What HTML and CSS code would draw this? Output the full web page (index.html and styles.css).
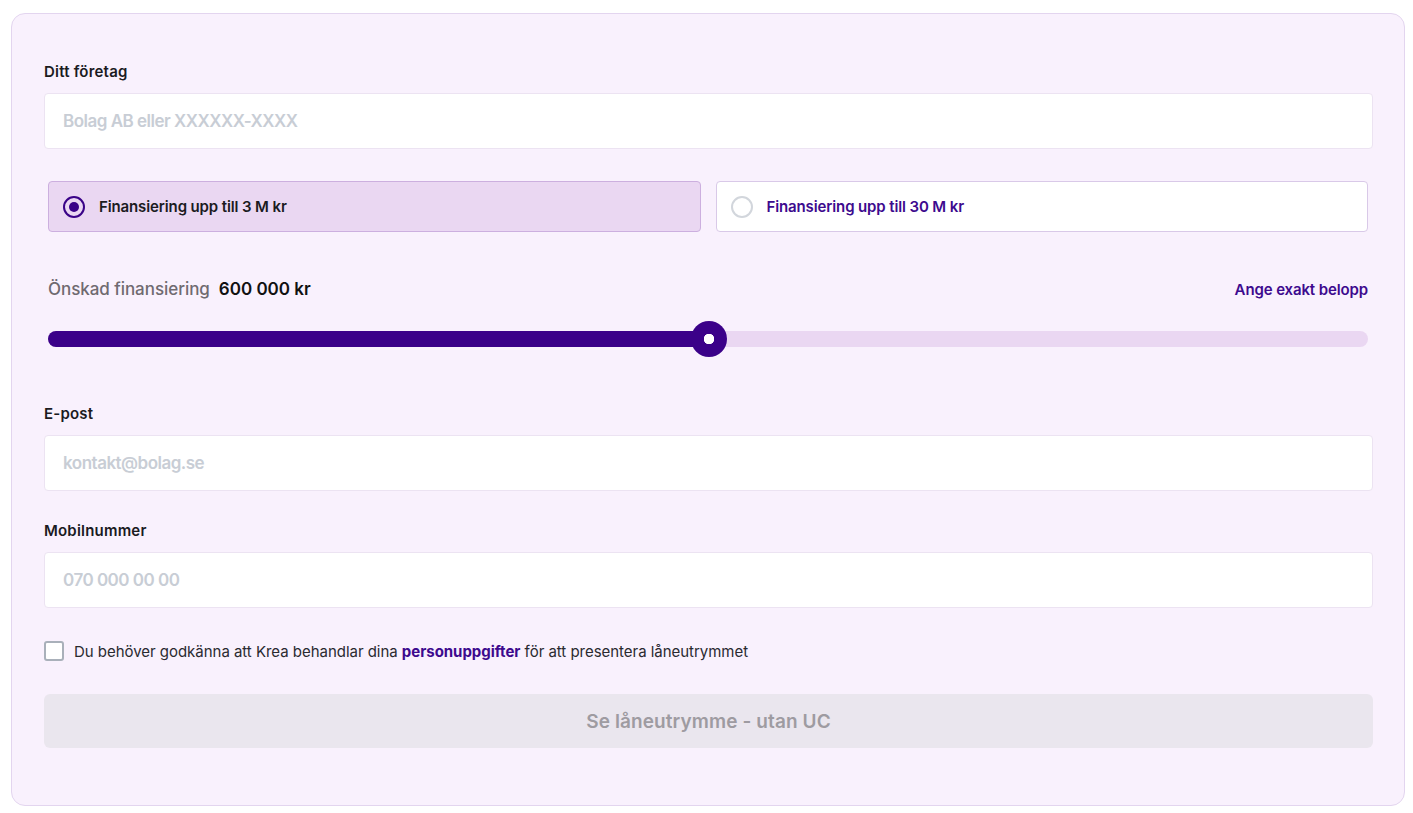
FILE: index.html
```
<!DOCTYPE html>
<html lang="sv">
<head>
<meta charset="utf-8">
<link rel="stylesheet" href="styles.css">
</head>
<body>
<form class="card">
  <div class="field">
    <label class="label">Ditt företag</label>
    <div class="input"><span class="placeholder">Bolag AB eller XXXXXX-XXXX</span></div>
  </div>

  <div class="options">
    <div class="option selected">
      <span class="radio on"><span class="dot"></span></span>
      <span class="option-text">Finansiering upp till 3 M kr</span>
    </div>
    <div class="option">
      <span class="radio"></span>
      <span class="option-text purple">Finansiering upp till 30 M kr</span>
    </div>
  </div>

  <div class="amount">
    <div class="amount-head">
      <div class="amount-left">
        <span class="amount-label">Önskad finansiering</span>
        <span class="amount-value">600 000 kr</span>
      </div>
      <a class="link">Ange exakt belopp</a>
    </div>
    <div class="track">
      <div class="fill" style="width:50%"></div>
      <div class="thumb" style="left:50%"></div>
    </div>
  </div>

  <div class="field email">
    <label class="label">E-post</label>
    <div class="input"><span class="placeholder">kontakt@bolag.se</span></div>
  </div>

  <div class="field phone">
    <label class="label">Mobilnummer</label>
    <div class="input"><span class="placeholder">070 000 00 00</span></div>
  </div>

  <div class="consent">
    <span class="checkbox"></span>
    <span class="consent-text">Du behöver godkänna att Krea behandlar dina <b class="purple">personuppgifter</b> för att presentera låneutrymmet</span>
  </div>

  <div class="button">Se låneutrymme - utan UC</div>
</form>
</body>
</html>
```
FILE: styles.css
```
* { box-sizing: border-box; }
html, body { margin: 0; padding: 0; background: #ffffff; }
body {
  padding: 13px 8px 7px 11px;
  font-family: Inter, "Noto Sans", "Liberation Sans", sans-serif;
  color: #1b1b1f;
}
.card {
  display: flex;
  flex-direction: column;
  width: 1394px;
  height: 793px;
  background: #f9f1fd;
  border: 1px solid #e3d5ef;
  border-radius: 14px;
  padding: 48px 31px 0 32px;
}
.field { display: flex; flex-direction: column; }
.label {
  font-size: 15px;
  line-height: 20px;
  font-weight: 600;
  color: #1b1b1f;
  letter-spacing: 0.2px;
  margin-bottom: 11px;
}
.input {
  height: 56px;
  background: #ffffff;
  border: 1px solid #ece3f2;
  border-radius: 4px;
  display: flex;
  align-items: center;
  padding-left: 18px;
}
.placeholder {
  font-size: 17px;
  color: #c8cdd5;
  font-weight: 600;
  letter-spacing: -0.5px;
}
.options {
  display: flex;
  gap: 15px;
  margin-top: 32px;
  padding: 0 5px 0 4px;
}
.option {
  flex: 1;
  height: 51px;
  border: 1px solid #d9c9e8;
  border-radius: 4px;
  background: #ffffff;
  display: flex;
  align-items: center;
  padding-left: 14px;
  gap: 14px;
}
.option.selected {
  background: #ead7f2;
  border-color: #ccafdf;
}
.radio {
  width: 22px;
  height: 22px;
  border-radius: 50%;
  border: 2px solid #d2d6dc;
  background: #fff;
  display: flex;
  align-items: center;
  justify-content: center;
}
.radio.on { border-color: #3a0388; background: transparent; }
.dot { width: 10px; height: 10px; border-radius: 50%; background: #3a0388; }
.option-text {
  font-size: 15px;
  font-weight: 600;
  color: #1b1b1f;
  letter-spacing: -0.12px;
}
.purple { color: #3d0a8e; }
.amount { margin-top: 45px; padding: 0 5px 0 4px; }
.amount-head {
  display: flex;
  justify-content: space-between;
  align-items: center;
  height: 24px;
}
.amount-left { display: flex; gap: 9px; align-items: baseline; }
.amount-label { font-size: 17px; font-weight: 500; color: #6f6a70; letter-spacing: -0.05px; }
.amount-value { font-size: 17px; font-weight: 600; color: #111; letter-spacing: 0; }
.link { font-size: 15px; font-weight: 600; color: #3d0a8e; letter-spacing: -0.12px; }
.track {
  position: relative;
  height: 16px;
  margin-top: 30px;
  background: #ead7f2;
  border-radius: 8px;
}
.fill {
  height: 16px;
  background: #3b0189;
  border-radius: 8px 0 0 8px;
}
.thumb {
  position: absolute;
  top: 50%;
  width: 36px;
  height: 36px;
  margin: -18px 0 0 -17px;
  border-radius: 50%;
  background: radial-gradient(circle, #ffffff 0 5px, #3b0189 5.5px);
}
.email { margin-top: 57px; }
.phone { margin-top: 30px; }
.consent {
  display: flex;
  align-items: center;
  gap: 10px;
  margin-top: 33px;
  height: 20px;
}
.checkbox {
  width: 20px;
  height: 20px;
  border: 2px solid #a9b0ba;
  border-radius: 3px;
  background: #fff;
}
.consent-text { font-size: 15px; color: #2a2a30; letter-spacing: -0.03px; }
.consent-text b { font-weight: 700; }
.button {
  margin-top: 33px;
  height: 54px;
  background: #eae6ee;
  border-radius: 6px;
  display: flex;
  align-items: center;
  justify-content: center;
  font-size: 19px;
  font-weight: 600;
  color: #9e9ba1;
  letter-spacing: 0.1px;
}
```
